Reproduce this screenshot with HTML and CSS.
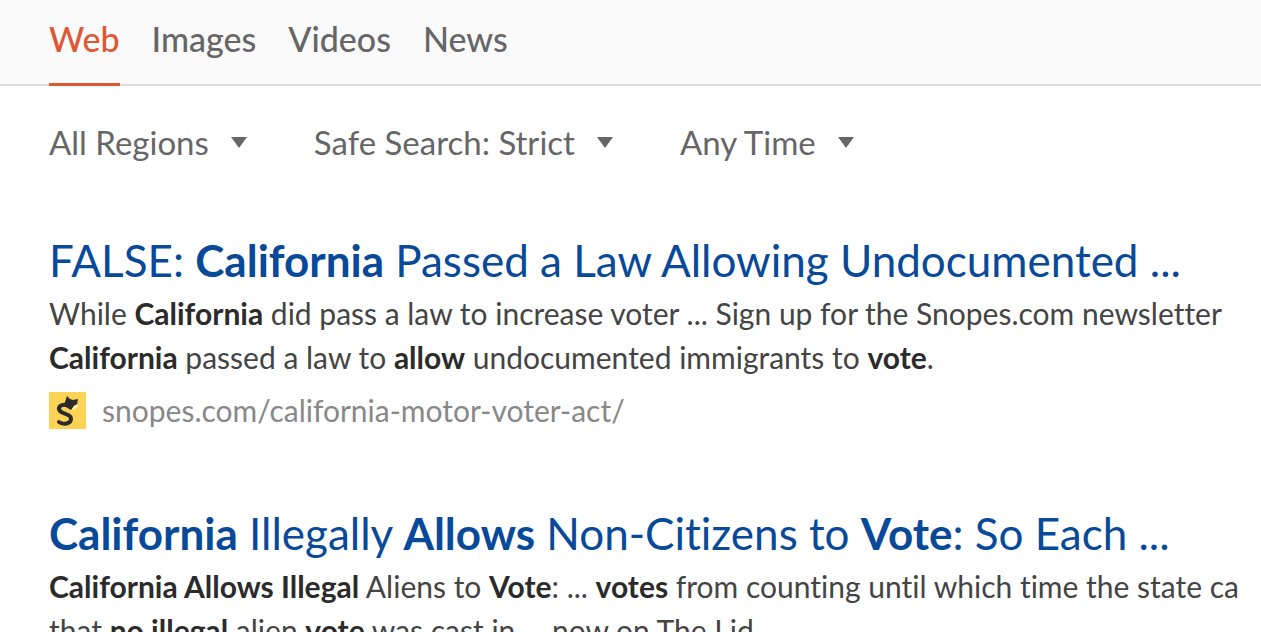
FILE: index.html
```html
<!DOCTYPE html>
<html lang="en">
<head>
<meta charset="utf-8">
<title>Search results</title>
<link rel="stylesheet" href="styles.css">
</head>
<body>
<header class="tabs">
<nav class="tab-list">
<a class="tab active" href="#">Web</a>
<a class="tab" href="#">Images</a>
<a class="tab" href="#">Videos</a>
<a class="tab" href="#">News</a>
</nav>
</header>
<main class="content">
<div class="filters">
<button class="filter" type="button">All Regions<svg class="caret" viewBox="0 0 16 12"><path d="M0 1H16L8 12Z"/></svg></button>
<button class="filter" type="button">Safe Search: Strict<svg class="caret" viewBox="0 0 16 12"><path d="M0 1H16L8 12Z"/></svg></button>
<button class="filter" type="button">Any Time<svg class="caret" viewBox="0 0 16 12"><path d="M0 1H16L8 12Z"/></svg></button>
</div>
<article class="result">
<h2 class="title"><a href="#">FALSE: <b>California</b> Passed a Law Allowing Undocumented ...</a></h2>
<p class="snippet">While <b>California</b> did pass a law to increase voter ... Sign up for the Snopes.com newsletter<br><b>California</b> passed a law to <b>allow</b> undocumented immigrants to <b>vote</b>.</p>
<a class="source" href="#"><svg class="favicon" viewBox="0 0 37 37"><path fill="#fdd355" d="M0 0H37V37H0Z"/><path fill="none" stroke="#2b2b2e" stroke-width="4" stroke-linecap="round" d="M18 13C12 12 8 15 11 19C14 23 22 21 22 27C22 32 14 33 10 30"/><path fill="#2b2b2e" d="M18 4L21 7L24 8L29 7L28 13L25 14L22 18L15 14L16 10Z"/><path fill="#fff0b5" d="M28 12L29 15L25 18L23 17L25 14Z"/></svg>snopes.com/california-motor-voter-act/</a>
</article>
<article class="result">
<h2 class="title"><a href="#"><b>California</b> Illegally <b>Allows</b> Non-Citizens to <b>Vote</b>: So Each ...</a></h2>
<p class="snippet"><b>California Allows Illegal</b> Aliens to <b>Vote</b>: ... <b>votes</b> from counting until which time the state ca<br>that <b>no illegal</b> alien <b>vote</b> was cast in ... now on The Lid</p>
</article>
</main>
</body>
</html>
```
FILE: styles.css
```css
* { box-sizing: border-box; }
body { margin: 0; height: 100vh; overflow: hidden; background: #fff; color: #444; font-family: Lato, sans-serif; font-variant-ligatures: none; }
a { color: inherit; text-decoration: none; }
.tabs { background: #fafafa; border-bottom: 2px solid #ddd; padding: 0 49px; }
.tab-list { display: flex; gap: 32px; }
.tab { padding: 19px 0 24px; margin-bottom: -2px; border-bottom: 3px solid transparent; font-size: 34px; line-height: 40px; font-weight: 500; color: #666; }
.tab.active { color: #de5833; border-color: #de5833; }
.content { padding: 36px 0 0 49px; white-space: nowrap; }
.filters { display: flex; gap: 67px; margin-bottom: 70px; }
.filter { display: flex; align-items: center; gap: 22px; padding: 0; border: 0; background: none; font: 33px/40px Lato, sans-serif; color: #666; }
.caret { width: 16px; height: 12px; fill: #666; }
.result { margin-bottom: 74px; }
.title { margin: 0 0 3px; font-size: 44px; line-height: 56px; font-weight: 400; color: #084999; }
.snippet { margin: 0; font-size: 30px; line-height: 44px; }
.snippet b { color: #2b2b2b; }
.source { display: flex; align-items: center; gap: 16px; margin-top: 10px; font-size: 30px; line-height: 42px; color: #888; }
.favicon { width: 37px; height: 37px; }
```
